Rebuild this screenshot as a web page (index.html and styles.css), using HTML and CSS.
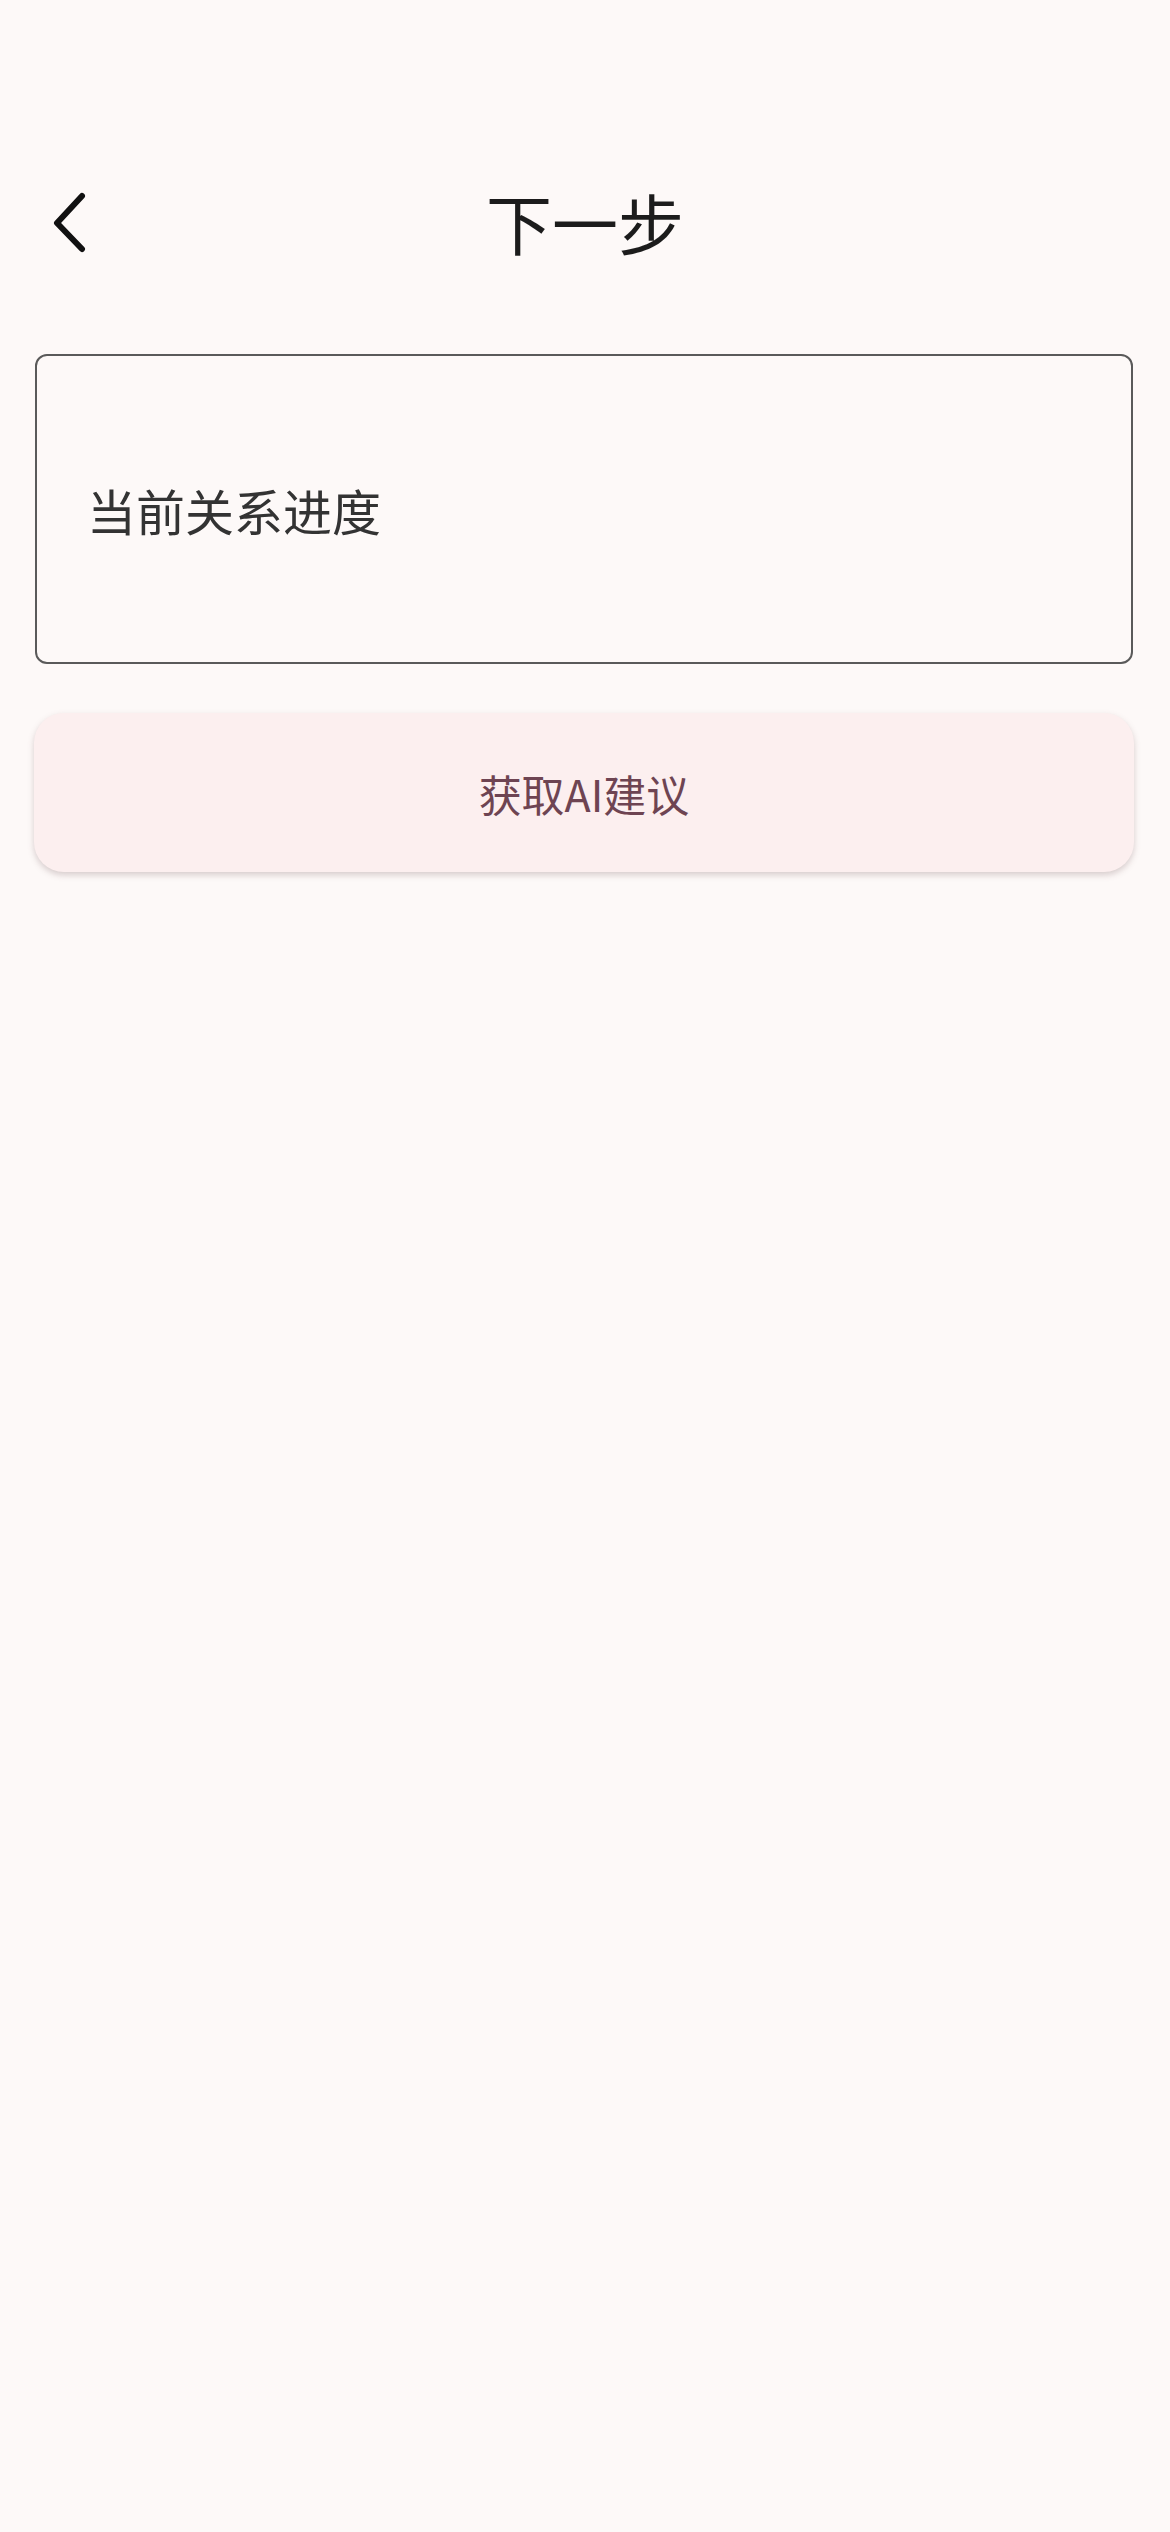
FILE: index.html
```html
<!DOCTYPE html>
<html lang="zh-CN">
<head>
    <meta charset="UTF-8">
    <meta name="viewport" content="width=device-width, initial-scale=1.0">
    <title>下一步</title>
    <link rel="stylesheet" href="styles.css">
</head>
<body>
    <div class="page">
        <header class="top-bar">
            <button class="back-btn" aria-label="返回">
                <svg width="40" height="64" viewBox="0 0 40 64">
                    <polyline points="30,7 5,34 30,60" fill="none" stroke="#111" stroke-width="6" stroke-linecap="round" stroke-linejoin="round"/>
                </svg>
            </button>
            <h1 class="title">下一步</h1>
            <div></div>
        </header>

        <div class="content">
            <div class="progress-box">
                <span class="progress-label">当前关系进度</span>
            </div>
            <button class="advice-btn">获取AI建议</button>
        </div>
    </div>
</body>
</html>
```

FILE: styles.css
```css
body {
    margin: 0;
    padding: 0;
    background-color: #fdf9f8;
    font-family: "Noto Sans CJK SC", "Noto Sans", sans-serif;
    min-height: 2532px;
}

.page {
    width: 1170px;
}

.top-bar {
    display: grid;
    grid-template-columns: 1fr auto 1fr;
    align-items: center;
    height: 122px;
    margin-top: 160px;
    padding: 0 35px;
}

.back-btn {
    justify-self: start;
    background: none;
    border: none;
    padding: 0;
    margin-left: 17px;
    display: flex;
    align-items: center;
    cursor: pointer;
}

.title {
    margin: 0;
    font-size: 66px;
    font-weight: 400;
    color: #1c1c1c;
    line-height: 1;
}

.content {
    padding: 0 36px 0 34px;
}

.progress-box {
    margin-top: 72px;
    margin-left: 1px;
    margin-right: 1px;
    height: 310px;
    box-sizing: border-box;
    border: 2px solid #5a5a5a;
    border-radius: 12px;
    display: flex;
    align-items: center;
    padding-left: 50px;
}

.progress-label {
    font-size: 49px;
    color: #333;
}

.advice-btn {
    display: block;
    width: 100%;
    margin-top: 49px;
    height: 159px;
    border: none;
    border-radius: 30px;
    background-color: #fcefef;
    box-shadow: 0 3px 6px rgba(120, 90, 95, 0.28);
    font-family: "Noto Sans CJK SC", "Noto Sans", sans-serif;
    font-size: 43px;
    color: #6e4452;
    cursor: pointer;
}
```
